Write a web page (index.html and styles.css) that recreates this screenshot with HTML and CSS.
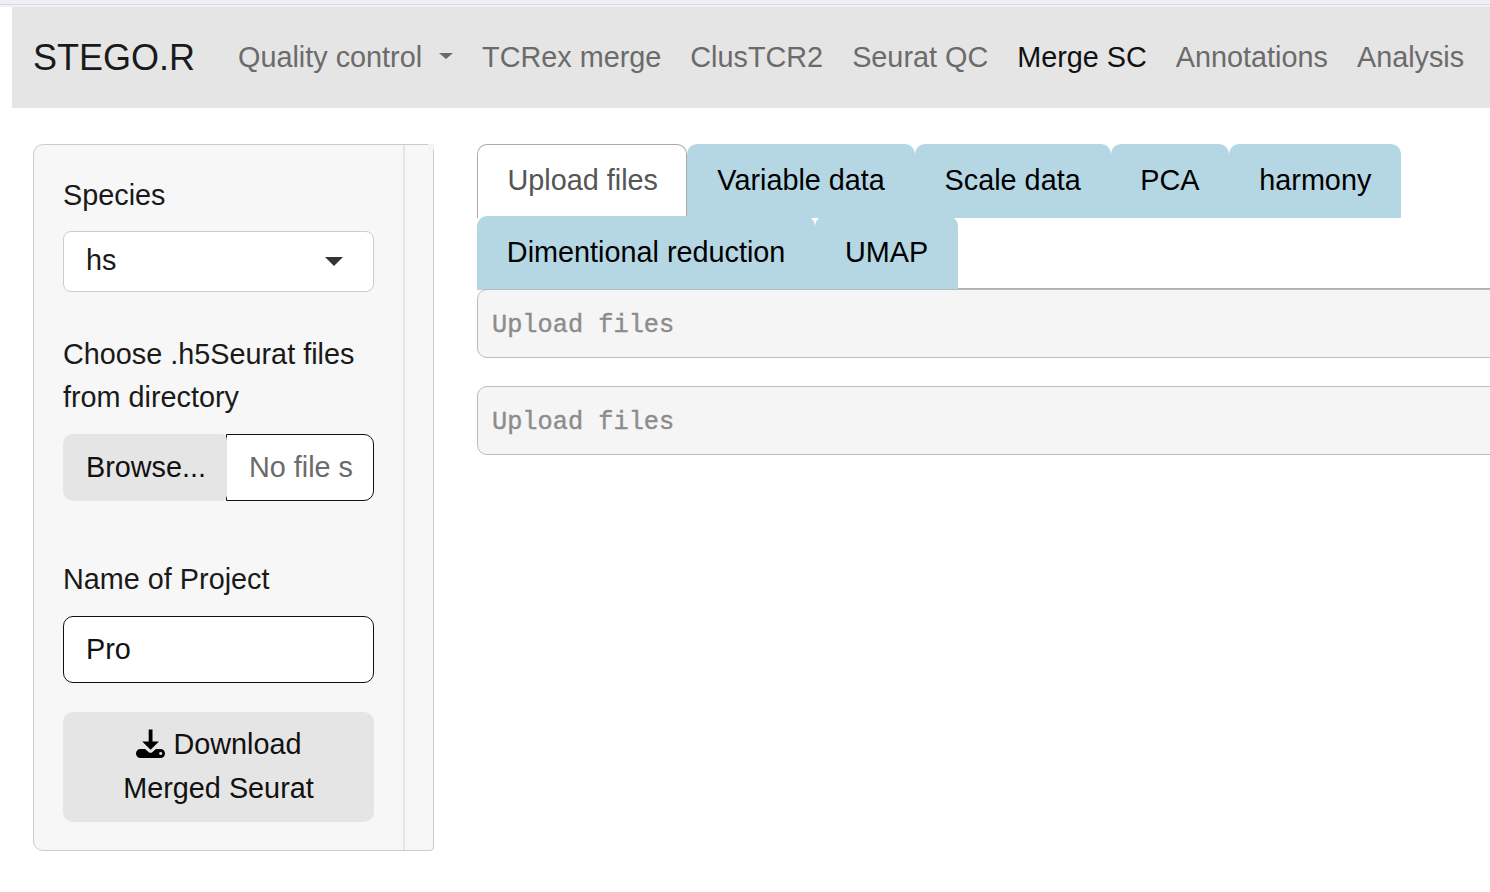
FILE: index.html
```html
<!DOCTYPE html>
<html lang="en">
<head>
<meta charset="utf-8">
<title>STEGO.R</title>
<link rel="stylesheet" href="styles.css">
</head>
<body>
<div class="topstrip"></div>
<div class="page">
  <nav class="navbar">
    <a class="brand">STEGO.R</a>
    <ul class="navlinks">
      <li><a class="navlink dropdown">Quality control<span class="caret"></span></a></li>
      <li><a class="navlink">TCRex merge</a></li>
      <li><a class="navlink">ClusTCR2</a></li>
      <li><a class="navlink">Seurat QC</a></li>
      <li><a class="navlink active">Merge SC</a></li>
      <li><a class="navlink">Annotations</a></li>
      <li><a class="navlink">Analysis</a></li>
    </ul>
  </nav>
  <div class="content">
    <aside class="sidebar">
      <div class="sidebar-body">
        <div class="field">
          <label class="label">Species</label>
          <div class="select"><span class="select-value">hs</span><span class="select-caret"></span></div>
        </div>
        <div class="field field-file">
          <label class="label">Choose .h5Seurat files from directory</label>
          <div class="filegroup">
            <span class="browse">Browse...</span>
            <span class="filename">No file s</span>
          </div>
        </div>
        <div class="field field-name">
          <label class="label">Name of Project</label>
          <div class="textinput">Pro</div>
        </div>
        <a class="download">
          <svg class="dl-icon" viewBox="0 0 30 30"><path d="M12.700 .5h3.800v12h6.500L14.600 20.800 6.200 12.500h6.500z"/><path fill-rule="evenodd" d="M4.500 20h4.500l3.500 3q2 1.700 4 0l3.500-3h4.500a4.500 4.500 0 0 1 0 9h-20a4.500 4.500 0 0 1 0-9zM24.700 22.900a1.600 1.600 0 1 0 .01 0z"/></svg>
          Download Merged Seurat
        </a>
      </div>
      <div class="sidebar-gutter"></div>
    </aside>
    <main class="main">
      <ul class="tabs">
        <li><a class="tab tab-active">Upload files</a></li>
        <li><a class="tab">Variable data</a></li>
        <li><a class="tab">Scale data</a></li>
        <li><a class="tab">PCA</a></li>
        <li><a class="tab">harmony</a></li>
        <li><a class="tab">Dimentional reduction</a></li>
        <li><a class="tab">UMAP</a></li>
      </ul>
      <pre class="output">Upload files</pre>
      <pre class="output">Upload files</pre>
    </main>
  </div>
</div>
</body>
</html>
```
FILE: styles.css
```css
* { box-sizing: border-box; }
html, body { margin: 0; height: 892px; overflow: hidden; background: #fff; }
body { font-family: "Liberation Sans", Arial, sans-serif; font-size: 28.8px; line-height: 1.5; color: #1a1a1a; }
ul { list-style: none; margin: 0; padding: 0; }
.topstrip { height: 7px; background: linear-gradient(#eef0f5 0 4px, #d9dbe3 4px 5px, #f0f1f6 5px); }
.page { padding-left: 12px; width: 1600px; }
.navbar { display: flex; align-items: center; height: 101px; background: #e5e5e5; padding: 0 21px; }
.brand { font-size: 36px; color: #1a1a1a; margin-right: 43px; line-height: 1; }
.navlinks { display: flex; gap: 29px; }
.navlink { color: #6b6b6b; display: flex; align-items: center; }
.navlink.active { color: #111; }
.caret { width: 0; height: 0; margin-left: 17px; border-top: 6.500px solid #6b6b6b; border-left: 7.500px solid transparent; border-right: 7.500px solid transparent; margin-bottom: 4px; }
.content { display: flex; align-items: flex-start; padding: 36px 0 0 21px; gap: 43px; }
.sidebar { display: flex; position: relative; width: 401px; height: 707px; background: #f7f7f7; border: 1px solid #ccc; border-radius: 10px 4px 4px 10px; }
.sidebar::after { content: ""; position: absolute; top: -1px; right: -1px; width: 6px; height: 6px; background: #f4f4f4; }
.sidebar-body { width: 369px; padding: 29px; flex: none; }
.sidebar-gutter { flex: 1; border-left: 2px solid #e6e6e6; }
.label { display: block; color: #1a1a1a; }
.select { display: flex; justify-content: space-between; align-items: center; height: 61px; margin-top: 14px; padding: 0 30px 0 22px; background: #fff; border: 1px solid #ccc; border-radius: 8px; width: 311px; }
.select-value { margin-bottom: 2px; }
.select-caret { width: 0; height: 0; border-top: 9px solid #333; border-left: 9px solid transparent; border-right: 9px solid transparent; }
.field-file { margin-top: 41px; width: 311px; }
.filegroup { display: flex; height: 67px; margin-top: 14.500px; }
.browse { width: 164px; flex: none; display: flex; align-items: center; padding-left: 23px; background: #e5e5e5; border-radius: 10px 6px 6px 10px; color: #111; position: relative; }
.filename { flex: 1; min-width: 0; margin-left: -1px; display: flex; align-items: center; padding-left: 22px; background: #fff; border: 1px solid #111; border-radius: 0 10px 10px 0; color: #6b6b6b; white-space: nowrap; }
.field-name { margin-top: 57px; width: 311px; }
.textinput { height: 67px; margin-top: 15px; display: flex; align-items: center; padding: 0 22px; background: #fff; border: 1px solid #111; border-radius: 10px; color: #111; }
.download { display: block; width: 311px; height: 110px; margin-top: 29px; padding: 10px 40px; background: #e5e5e5; border-radius: 10px; text-align: center; color: #111; line-height: 44px; }
.dl-icon { width: 30px; height: 30px; vertical-align: -5px; margin: 0 -1px 0 1px; fill: #000; }
.main { width: 1100px; }
.tabs { display: flex; flex-wrap: wrap; width: 1100px; border-bottom: 2px solid #b0b0b0; position: relative; }
.tabs li { margin-bottom: -2px; }
.tab { display: block; height: 74px; padding: 15px 29.850px; background: #b5d6e3; color: #000; border-radius: 10px 10px 0 0; white-space: nowrap; }
.tab-active { background: #fff; color: #555; border: 1px solid #aaa; border-bottom: 0; padding: 14px 28.500px 14px 29.500px; }
.output { height: 69px; margin: 0 0 28px; padding: 21px 14px; background: #f5f5f5; border: 1px solid #bbb; border-radius: 10px; font-family: "Liberation Mono", "Courier New", monospace; font-size: 25.3px; line-height: 29px; color: #8c8c8c; -webkit-text-stroke: 0.4px #8c8c8c; position: relative; }
.tabs + .output { margin-top: -1px; }
```
